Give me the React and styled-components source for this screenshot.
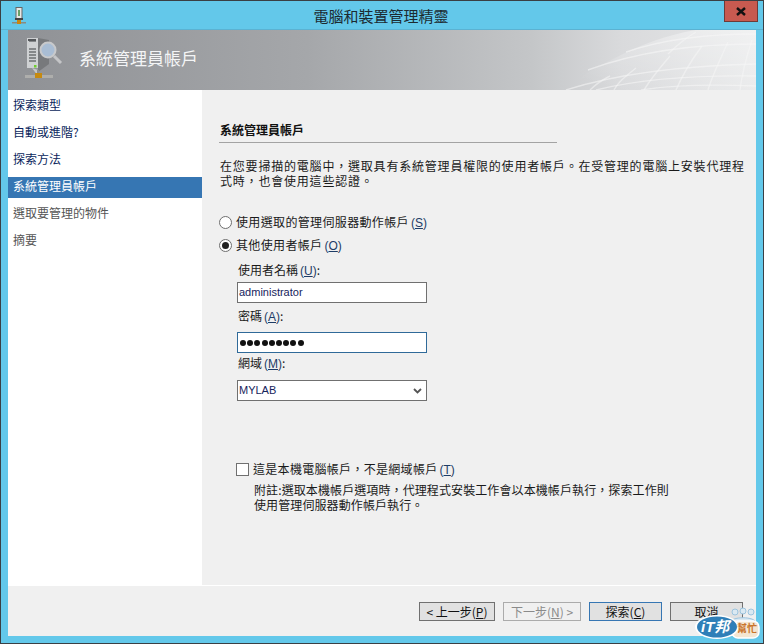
import React from "react";
import styled, { createGlobalStyle } from "styled-components";

const Global = createGlobalStyle`
  html, body { margin: 0; padding: 0; background: #fff; }
  #root { width: 764px; height: 644px; }
`;
const CJK = `"Noto Sans CJK TC", "Liberation Sans", sans-serif`;

const Frame = styled.div`
  position: relative; box-sizing: border-box; width: 764px; height: 644px;
  border: 1px solid #3a3f44; background: #63c8ea; overflow: hidden;
  display: flex; flex-direction: column; font: 12px/15px ${CJK}; color: #1a1a1a;
`;
const TitleBar = styled.header`
  height: 28px; flex: none; display: flex; align-items: flex-start; position: relative;
  border-bottom: 1px solid #5bb2d2;
`;
const AppIcon = styled.svg`width: 14px; height: 18px; margin: 6px 0 0 11px; flex: none;`;
const TitleText = styled.div`
  flex: 1; text-align: center; font-size: 15px; line-height: 29px; color: #1c2a30; padding-left: 12px;
`;
const CloseBtn = styled.div`
  box-sizing: border-box; flex: none; width: 34px; height: 21px; margin-right: 5px;
  background: #c75a50; border: 1px solid #6e3a38; border-top: none;
  display: flex; align-items: center; justify-content: center;
`;
const Body = styled.div`
  flex: 1; margin: 0 7px 7px; display: flex; flex-direction: column; background: #f0f0f0; min-height: 0;
`;
const Banner = styled.div`
  position: relative; height: 60px; flex: none; display: flex; align-items: center; overflow: hidden;
  background: linear-gradient(90deg, #8f9195 0%, #a5a7aa 40%, #c4c6c8 70%, #d9dadc 82%, #e6e7e8 100%);
`;
const Mesh = styled.svg`position: absolute; right: 0; top: 0; width: 220px; height: 60px;`;
const BannerIcon = styled.svg`width: 42px; height: 48px; margin-left: 16px; flex: none; position: relative;`;
const BannerTitle = styled.div`
  margin-left: 13px; font-size: 17px; color: #f4f5f6; position: relative; line-height: 22px; margin-top: -4px;
`;
const Columns = styled.div`flex: 1; display: flex; min-height: 0;`;
const Side = styled.nav`
  width: 194px; flex: none; background: #fff; padding-top: 6px; display: flex; flex-direction: column; gap: 6px;
`;
const SideItem = styled.div`
  height: 21px; padding: 0 5px; line-height: 18px;
  color: ${p => (p.$active ? "#fff" : p.$off ? "#555" : "#0a1f5c")};
  background: ${p => (p.$active ? "#3676b3" : "transparent")};
`;
const Main = styled.main`flex: 1; padding: 32px 0 0 17px; display: flex; flex-direction: column;`;
const Heading = styled.h2`
  margin: 0; width: 337px; height: 20px; font-size: 12px; font-weight: 700; line-height: 15px;
  padding-left: 1px; border-bottom: 1px solid #a3a3a3; box-sizing: content-box; color: #111;
`;
const Desc = styled.p`margin: 15px 0 0 1px; width: 530px; line-height: 15px; letter-spacing: 0.8px;`;
const Choice = styled.label`
  display: flex; align-items: center; height: 16px; margin-top: ${p => p.$mt}px; gap: 4px; letter-spacing: 0.35px;
`;
const RadioDot = styled.span`
  box-sizing: border-box; width: 13px; height: 13px; border-radius: 50%; border: 1px solid #6f6f6f; background: #fff;
  flex: none; display: flex; align-items: center; justify-content: center;
  &::after { content: ""; width: 7px; height: 7px; border-radius: 50%; background: ${p => (p.$on ? "#222" : "transparent")}; }
`;
const ChoiceText = styled.span`white-space: nowrap;`;
const Access = styled.span`
  font-family: "Liberation Sans", sans-serif; color: #1d3c66; margin-left: 2px; letter-spacing: 0;
  & > u { text-underline-offset: 1px; }
`;
const Fields = styled.div`margin-left: 18px; display: flex; flex-direction: column;`;
const FieldLabel = styled.div`height: 15px; line-height: 15px; margin: ${p => p.$mt}px 0 0 1px;`;
const TextBox = styled.div`
  box-sizing: border-box; width: 190px; height: 21px; margin-top: ${p => p.$mt}px; background: #fff;
  border: 1px solid ${p => (p.$focus ? "#2f6a99" : "#707070")};
  display: flex; align-items: center; justify-content: space-between; padding: 0 4px 0 1px;
  font: 11px/15px "Liberation Sans", sans-serif; color: #16235c;
`;
const Dots = styled.span`display: flex; gap: 1.2px; margin-left: 1px;`;
const Dot = styled.i`width: 6px; height: 6px; border-radius: 50%; background: #111; display: block;`;
const CheckRow = styled.label`
  display: flex; align-items: center; height: 15px; margin: 61px 0 0 17px; gap: 4px; letter-spacing: 0.3px;
`;
const CheckBox = styled.span`
  box-sizing: border-box; width: 13px; height: 13px; border: 1px solid #707070; background: #fff; flex: none;
`;
const Note = styled.p`margin: 5px 0 0 35px; width: 422px; line-height: 15px; letter-spacing: 0.1px;`;
const Footer = styled.footer`
  height: 51px; flex: none; border-top: 1px solid #fff; display: flex; justify-content: flex-end;
  align-items: flex-start; gap: 8px; padding: 16px 13px 0 0; box-sizing: border-box;
`;
const Btn = styled.div`
  box-sizing: border-box; width: ${p => p.$w}px; height: 19px; flex: none; text-align: center; line-height: 17px;
  background: ${p => (p.$off ? "#f0f0f0" : "#e1e1e1")};
  border: 1px solid ${p => (p.$primary ? "#3676b3" : p.$off ? "#ababab" : "#707070")};
  color: ${p => (p.$off ? "#8a8a8a" : "#111")};
  u { text-underline-offset: 1px; }
`;
const Badge = styled.div`position: absolute; right: 0; bottom: 0; width: 68px; height: 37px;`;
const BadgeSvg = styled.svg`position: absolute; inset: 0; width: 68px; height: 37px;`;
const BadgeIt = styled.span`
  position: absolute; left: 6px; top: 13px; font: italic 700 15px/16px "Liberation Sans", ${CJK}; color: #fff; white-space: nowrap;
`;
const BadgeHelp = styled.span`
  position: absolute; left: 42px; top: 16px; font: 700 10px/12px ${CJK}; color: #c9742a; white-space: nowrap;
`;

const Key = ({ c }) => <Access>(<u>{c}</u>)</Access>;

const horizontals = [
  "M30 60 C80 44 140 36 220 34",
  "M60 60 C100 50 150 45 220 46",
  "M105 60 C130 56 170 54 220 56",
  "M52 40 C100 22 160 14 220 14",
  "M90 22 C125 10 170 4 220 4",
];
const verticals = [
  "M78 60 C82 52 90 46 100 38", "M108 60 C114 50 122 40 134 26", "M140 60 C146 46 154 32 166 16",
  "M172 60 C176 46 184 30 192 12", "M204 60 C206 44 210 28 216 10", "M54 60 C60 54 66 50 74 46",
  "M132 24 C140 16 150 8 160 2",
];

export default function App() {
  return (
    <Frame>
      <Global />
      <TitleBar>
        <AppIcon viewBox="0 0 14 18">
          <rect x="4" y="0.5" width="6" height="11" fill="#e8e8e6" stroke="#666" />
          <rect x="6" y="3" width="2" height="6" fill="#6aa06a" />
          <rect x="3" y="11" width="8" height="2" fill="#444" />
          <rect x="0" y="15" width="14" height="1.5" fill="#8a8a80" />
          <rect x="5" y="13" width="4" height="4" fill="#c9860f" />
        </AppIcon>
        <TitleText>電腦和裝置管理精靈</TitleText>
        <CloseBtn>
          <svg width="10" height="9" viewBox="0 0 10 9">
            <path d="M1 1 L9 8 M9 1 L1 8" stroke="#111" strokeWidth="2.4" />
          </svg>
        </CloseBtn>
      </TitleBar>
      <Body>
        <Banner>
          <Mesh viewBox="0 0 220 60">
            <defs>
              <linearGradient id="meshFill" x1="0" y1="1" x2="1" y2="0">
                <stop offset="0.15" stopColor="#fff" stopOpacity="0" />
                <stop offset="1" stopColor="#fff" stopOpacity="0.45" />
              </linearGradient>
            </defs>
            <path d="M20 60 C60 40 100 10 160 0 L220 0 L220 60 Z" fill="url(#meshFill)" />
            {horizontals.map(d => <path key={d} d={d} fill="none" stroke="#f7f7f8" strokeOpacity="0.55" strokeWidth="1.4" />)}
            {verticals.map(d => <path key={d} d={d} fill="none" stroke="#f5f5f6" strokeOpacity="0.55" strokeWidth="1.4" />)}
          </Mesh>
          <BannerIcon viewBox="0 0 42 48">
            <path d="M3 2 H14 V32 H3 Z" fill="#cfd1d3" />
            <path d="M14 2 L25 4 V28 L14 36 Z" fill="#77797c" />
            <path d="M5 5 H12 M5 13 H12 M5 16 H12 M5 19 H12 M5 22 H12 M5 25 H12" stroke="#6d7073" strokeWidth="1.4" />
            <rect x="4" y="3" width="8" height="2" fill="#55585b" />
            <rect x="10" y="29" width="2.5" height="2.5" fill="#6fcf2e" />
            <path d="M14 34 L8 32 L14 40 Z" fill="#e8e9ea" opacity="0.6" />
            <circle cx="24" cy="14" r="7.5" fill="#a9bdd4" stroke="#c8c9cb" strokeWidth="2" />
            <path d="M30 20 L37 27" stroke="#c4c5c7" strokeWidth="3" />
            <rect x="1" y="39" width="28" height="3" fill="#aeaeac" />
            <path d="M14 34 V38" stroke="#8b8d8f" strokeWidth="2" />
            <rect x="11" y="37" width="7" height="5" fill="#c68a10" />
          </BannerIcon>
          <BannerTitle>系統管理員帳戶</BannerTitle>
        </Banner>
        <Columns>
          <Side>
            <SideItem>探索類型</SideItem>
            <SideItem>自動或進階?</SideItem>
            <SideItem>探索方法</SideItem>
            <SideItem $active>系統管理員帳戶</SideItem>
            <SideItem $off>選取要管理的物件</SideItem>
            <SideItem $off>摘要</SideItem>
          </Side>
          <Main>
            <Heading>系統管理員帳戶</Heading>
            <Desc>{"在您要掃描的電腦中\uFF0C選取具有系統管理員權限的使用者帳戶。在受管理的電腦上安裝代理程式時\uFF0C也會使用這些認證。"}</Desc>
            <Choice $mt={26}><RadioDot /><ChoiceText>使用選取的管理伺服器動作帳戶<Key c="S" /></ChoiceText></Choice>
            <Choice $mt={7}><RadioDot $on /><ChoiceText>其他使用者帳戶<Key c="O" /></ChoiceText></Choice>
            <Fields>
              <FieldLabel $mt={9}>使用者名稱<Key c="U" />:</FieldLabel>
              <TextBox $mt={5}>administrator</TextBox>
              <FieldLabel $mt={5}>密碼<Key c="A" />:</FieldLabel>
              <TextBox $mt={9} $focus>
                <Dots>{Array.from({ length: 9 }, (_, i) => <Dot key={i} />)}</Dots>
              </TextBox>
              <FieldLabel $mt={2}>網域<Key c="M" />:</FieldLabel>
              <TextBox $mt={10}>
                MYLAB
                <svg width="9" height="6" viewBox="0 0 9 6"><path d="M1 1 L4.5 4.5 L8 1" fill="none" stroke="#555" strokeWidth="1.8" /></svg>
              </TextBox>
            </Fields>
            <CheckRow><CheckBox /><ChoiceText>{"這是本機電腦帳戶\uFF0C不是網域帳戶"}<Key c="T" /></ChoiceText></CheckRow>
            <Note>{"附註:選取本機帳戶選項時\uFF0C代理程式安裝工作會以本機帳戶執行\uFF0C探索工作則使用管理伺服器動作帳戶執行。"}</Note>
          </Main>
        </Columns>
        <Footer>
          <Btn $w={76}>&lt; 上一步(<u>P</u>)</Btn>
          <Btn $w={78} $off>下一步(<u>N</u>) &gt;</Btn>
          <Btn $w={73} $primary>探索(<u>C</u>)</Btn>
          <Btn $w={73}>取消</Btn>
        </Footer>
      </Body>
      <Badge>
        <BadgeSvg viewBox="0 0 68 37">
          <g fill="#dbe9f2" stroke="#9cc4de" strokeWidth="1">
            <circle cx="40" cy="6" r="3" />
            <circle cx="48" cy="5" r="3" />
            <circle cx="56" cy="6" r="3" />
            <path d="M35 17 C35 10 61 10 61 17 Z" />
          </g>
          <rect x="37" y="15" width="27" height="17" rx="6" fill="#f3e6d2" stroke="#fff" strokeWidth="1.5" />
          <ellipse cx="22" cy="21" rx="22" ry="12" fill="#fff" />
          <ellipse cx="22" cy="21" rx="20" ry="10.5" fill="#2f7fb8" />
        </BadgeSvg>
        <BadgeIt>iT邦</BadgeIt>
        <BadgeHelp>幫忙</BadgeHelp>
      </Badge>
    </Frame>
  );
}
